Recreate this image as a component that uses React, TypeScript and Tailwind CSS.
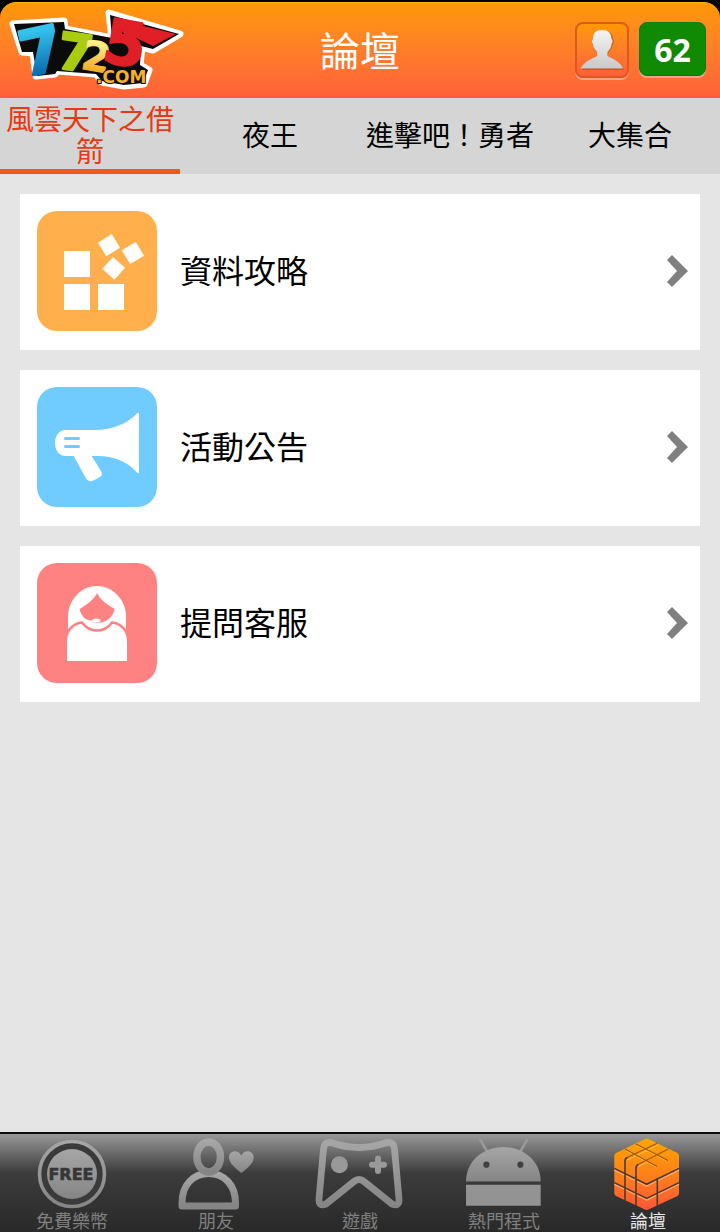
import { useState } from "react";

const Logo = () => (
  <svg viewBox="0 3 190 95" className="w-[190px] h-[95px]" role="img" aria-label="7725.com">
    <defs>
      <linearGradient id="logoBlue" x1="0" y1="0" x2="0" y2="1">
        <stop offset="0.2" stopColor="#35c3ec" />
        <stop offset="0.8" stopColor="#0b6cad" />
      </linearGradient>
      <linearGradient id="logoGold" x1="0" y1="0" x2="0" y2="1">
        <stop offset="0.2" stopColor="#fff08a" />
        <stop offset="0.8" stopColor="#f3ab25" />
      </linearGradient>
    </defs>
    {/* black badge with the white sticker edge */}
    <path
      d="M13 24 L64 21 L65 29 L112 38 L109 13 L180 34 L153 50 L142 47 L140 65 L149 70 L144 84 L124 86 L102 82 L96 74 L57 71 L55 74 L36 76 L33 53 L22 52 Z"
      fill="#0b0b0b"
      stroke="#fff"
      strokeWidth="7"
      strokeLinejoin="round"
    />
    <path
      d="M14 24 L64 22 L65 29 L112 38 L110 15 L179 34 L153 49 L141 46 L140 65 L148 70 L143 83 L124 85 L102 81 L96 74 L57 71 L55 74 L37 76 L33 52 L22 52 Z"
      fill="#0b0b0b"
    />
    <path d="M115 19 L176 34 L153 46 L136 38 L130 44 Z" fill="#e01f26" />
    <g fontFamily="DejaVu Sans" fontWeight="bold" strokeLinejoin="round">
      <text x="19" y="73" fontSize="62" fill="url(#logoBlue)" stroke="url(#logoBlue)" strokeWidth="3" transform="rotate(-12 40 50)">
        7
      </text>
      <text x="58" y="70" fontSize="50" fill="#a9cc10" stroke="#a9cc10" strokeWidth="3" transform="rotate(8 75 52)">
        7
      </text>
      <text x="82" y="71" fontSize="41" fill="url(#logoGold)" stroke="url(#logoGold)" strokeWidth="1" transform="rotate(10 95 57)">
        2
      </text>
      <text x="104" y="65" fontSize="61" fill="#e01f26" stroke="#e01f26" strokeWidth="2" transform="rotate(10 125 43)">
        5
      </text>
      <text x="96" y="83" fontSize="17" fill="#f6b127" stroke="#0b0b0b" strokeWidth="2" paintOrder="stroke">
        .COM
      </text>
    </g>
  </svg>
);

const UserIcon = () => (
  <svg viewBox="2 2 50 52" className="w-full h-full" aria-hidden="true">
    <defs>
      <linearGradient id="person" x1="0" y1="0" x2="0" y2="1">
        <stop offset="0" stopColor="#f4f4f4" />
        <stop offset="1" stopColor="#c9c9c9" />
      </linearGradient>
    </defs>
    <path
      d="M7 48 C9 41 17 38 22 35 V31 C19 28 18 24 18 22 C16 20 17 18 18 17 C18 11 22 9 28 9 S38 11 38 17 C39 18 40 20 38 22 C38 24 36 28 33 31 V35 C38 38 47 41 49 48 Z"
      fill="#a84a1c"
      opacity="0.6"
    />
    <path
      d="M6 46.5 C8 40 17 37 22 34 V30 C19 27 18 24 18 22 C16 20 17 18 18 17 C18 11 21 8 27 8 S36.5 11 36.5 17 C38 18 38 20 36.5 22 C36.5 24 35.5 27 32.5 30 V34 C37.5 37 46 40 48 46.5 Z"
      fill="url(#person)"
    />
  </svg>
);

const Chevron = () => (
  <svg viewBox="0 0 22 34" className="w-[22px] h-[34px]" aria-hidden="true">
    <path d="M1 6 L6 1 L22 17 L6 33 L1 28 L11 17 Z" fill="#808080" />
  </svg>
);

const BlocksIcon = () => (
  <svg viewBox="0 0 120 120" className="w-full h-full" fill="#fff" aria-hidden="true">
    <path d="M27 40h26v26h-26z M27 73h26v26h-26z M61 73h26v26h-26z" />
    <path d="M61 31.7 L74.7 23 L83 36.7 L69.3 45.3 Z M84.7 39.3 L98.7 31 L107 44.7 L93.3 53 Z M65.3 57.7 L76 46 L88 56.7 L77.3 68.7 Z" />
  </svg>
);

const MegaphoneIcon = () => (
  <svg viewBox="0 0 120 120" className="w-full h-full" fill="#fff" aria-hidden="true">
    <path d="M29 43 H58 C76 43 91 36 100 26.5 Q102 25 102 27 V85 Q102 87 100 85.5 C90 74 76 69 61 69 H54.7 L64.3 84.5 Q66 88 63 90 L57 93.3 Q52 95.5 49.3 92 L36.7 69 H29 C22 69 18 63 18 56 S22 43 29 43 Z" />
    <path d="M28.5 51.5 H41.5 M28.5 59.5 H41.5" stroke="#70ccff" strokeWidth="3.2" strokeLinecap="round" />
  </svg>
);

const SupportIcon = () => (
  <svg viewBox="0 0 120 120" className="w-full h-full" fill="#fff" aria-hidden="true">
    <path d="M31 67 V54 C31 36 45 23 60 23 S89 36 89 54 V67 Z" />
    <path d="M60 30 C57 37 49 42 42.7 46 C44 54 51 60 60 60 C69 60 76 54 77.7 46 C71 42 63 37 60 30 Z" fill="#ff8282" />
    <path d="M44 54 C47 57 51 59 58 58.5" fill="none" stroke="#fff" strokeWidth="1.8" />
    <ellipse cx="59.5" cy="57.5" rx="4" ry="2" />
    <path
      d="M28.7 99.3 V79 C28.7 67 37 60 45 59.5 C49 65 54 67.5 60 67.5 C66 67.5 71 65 75 59.5 C83 60 91.3 67 91.3 79 V99.3 Z"
      stroke="#ff8282"
      strokeWidth="2.6"
    />
  </svg>
);

const FreeIcon = () => (
  <svg viewBox="0 0 96 74" className="w-24 h-[74px]" aria-hidden="true">
    <circle cx="48" cy="36" r="32.5" fill="#3a3a3a" stroke="url(#navGray)" strokeWidth="3.6" />
    <circle cx="48" cy="36" r="25" fill="url(#navGray)" />
    <text
      x="47"
      y="42"
      fontSize="16"
      fontWeight="bold"
      fontFamily="DejaVu Sans"
      textAnchor="middle"
      fill="#363636"
      stroke="#363636"
      strokeWidth="0.6"
    >
      FREE
    </text>
  </svg>
);

const FriendsIcon = () => (
  <svg viewBox="0 0 96 74" className="w-24 h-[74px]" fill="none" aria-hidden="true">
    <path d="M14 68 V65 C14 47 25 35.5 40.7 35.5 S67.5 47 67.5 65 V68 Z" stroke="url(#navGray)" strokeWidth="7" strokeLinejoin="round" />
    <ellipse cx="40.7" cy="19" rx="11.8" ry="15" stroke="url(#navGray)" strokeWidth="7.4" />
    <path
      d="M73.3 35 C70 32 61 26 61 19.5 C61 12 70.5 11 73.3 17.5 C76 11 85.7 12 85.7 19.5 C85.7 26 77 32 73.3 35 Z"
      fill="url(#navGray)"
    />
  </svg>
);

const GameIcon = () => (
  <svg viewBox="0 0 96 74" className="w-24 h-[74px]" aria-hidden="true">
    <path
      d="M11.5 11 Q12 4 19 4.5 Q33 9.5 47 9.5 T75 4.5 Q82 4 82.5 11 L87 61 Q87.5 69 80 66 L52 43.5 Q47 39.5 42 43.5 L14 66 Q6.5 69 7 61 Z"
      fill="none"
      stroke="url(#navGray)"
      strokeWidth="6.8"
      strokeLinejoin="round"
    />
    <circle cx="27.4" cy="26.7" r="8.5" fill="#999" />
    <path d="M66 20.5 V33 M60 26.7 H72" stroke="#999" strokeWidth="6" strokeLinecap="round" />
  </svg>
);

const AndroidIcon = () => (
  <svg viewBox="0 0 96 74" className="w-24 h-[74px]" aria-hidden="true">
    <path d="M24.5 2 L32 15 M71 2 L63.5 15" stroke="#999" strokeWidth="2.6" strokeLinecap="round" />
    <path d="M10 43.6 C10 23 27 9 47.3 9 S84.7 23 84.7 43.6 Z" fill="url(#navGray)" />
    <path d="M10 46.8 H84.7 V67.8 H10 Z" fill="#939393" />
    <circle cx="30.4" cy="26.7" r="3.1" fill="#404040" />
    <circle cx="64.4" cy="26.7" r="3.1" fill="#404040" />
  </svg>
);

const CubeIcon = () => (
  <svg viewBox="0 0 96 74" className="w-24 h-[74px]" fill="none" aria-hidden="true">
    <defs>
      <linearGradient id="cube" x1="0" y1="0" x2="0" y2="1">
        <stop offset="0" stopColor="#ffa502" />
        <stop offset="0.5" stopColor="#ff8119" />
        <stop offset="1" stopColor="#ff5636" />
      </linearGradient>
    </defs>
    <path
      d="M45 1 Q46.7 0 48.4 1 L77.5 15 Q79 16 79 18 V55 Q79 57 77.5 58 L48.4 71.5 Q46.7 72.3 45 71.5 L16 58 Q14.3 57 14.3 55 V18 Q14.3 16 16 15 Z"
      fill="url(#cube)"
    />
    {/* highlights sit just under each gap */}
    <path d="M14.3 32 L46.7 48 L79 32 M14.3 46.2 L46.7 62 L79 46.2" stroke="#ffa66b" strokeWidth="1.4" />
    <path d="M38 28.6 L47 24.5 M27.5 22 L58 7 M37 7.5 L66 22.5 M26 12.5 L56 29" stroke="#ffc04a" strokeWidth="1" />
    <path d="M25 20.5 L57.3 5.3 M36 27.5 L68.3 11 M36 6 L68 22.5 M25 11 L57 28.5" stroke="#9a5a10" strokeWidth="1.2" />
    <path
      d="M14.3 30.4 L46.7 46.2 L79 30.4 M14.3 44.6 L46.7 60.4 L79 44.6 M25 63 V23 Q25 20.5 27.5 19.5 M36 68 V30 Q36 27.5 38.5 26.5 M57.3 68 V40"
      stroke="#4a3a2c"
      strokeWidth="1.6"
      strokeLinejoin="round"
    />
  </svg>
);

const tabs = ["風雲天下之借箭", "夜王", "進擊吧！勇者", "大集合"];

const sections = [
  { label: "資料攻略", color: "bg-[#ffb04c]", Icon: BlocksIcon },
  { label: "活動公告", color: "bg-[#70ccff]", Icon: MegaphoneIcon },
  { label: "提問客服", color: "bg-[#ff8282]", Icon: SupportIcon },
];

const navItems = [
  { label: "免費樂幣", Icon: FreeIcon },
  { label: "朋友", Icon: FriendsIcon },
  { label: "遊戲", Icon: GameIcon },
  { label: "熱門程式", Icon: AndroidIcon },
  { label: "論壇", Icon: CubeIcon, active: true },
];

const App = () => {
  const [activeTab, setActiveTab] = useState<number>(0);

  return (
    <div
      lang="zh-TW"
      className="flex flex-col min-h-screen bg-[#e5e5e5] text-black font-['Roboto','Noto_Sans_CJK_TC',sans-serif]"
    >
      {/* gradient shared by the bottom icons */}
      <svg className="absolute w-0 h-0" aria-hidden="true">
        <defs>
          <linearGradient id="navGray" x1="0" y1="0" x2="0" y2="1">
            <stop offset="0" stopColor="#a6a6a6" />
            <stop offset="1" stopColor="#858585" />
          </linearGradient>
        </defs>
      </svg>

      <div className="bg-black pt-0.5">
        <header className="grid grid-cols-[1fr_auto_1fr] items-center h-24 rounded-t-2xl border-t border-[#ffb400] bg-linear-to-b from-[#ff9800] to-[#ff5f38]">
          <Logo />
          <h1 className="text-white text-[40px] leading-[48px] pt-1">論壇</h1>
          <div className="flex justify-end gap-2.5 pr-3.5 pb-0.5">
            <button
              type="button"
              aria-label="個人資料"
              className="w-[54px] h-14 rounded-lg border-2 border-[#dc5a20] shadow-[0_2px_0_#ffa58a] bg-linear-to-b from-[#ff9800] to-[#ff5f38]"
            >
              <UserIcon />
            </button>
            <button
              type="button"
              className="w-[67px] h-[54px] rounded-lg border border-[#0a7a06] shadow-[0_2px_0_#e8a58a] bg-[#108a04] text-white text-[32px] leading-[54px] font-bold font-['Open_Sans',sans-serif]"
            >
              62
            </button>
          </div>
        </header>
      </div>

      <nav className="grid grid-cols-4 min-h-[76px] bg-[#d5d5d5]">
        {tabs.map((tab, index) => (
          <button
            type="button"
            key={tab}
            onClick={() => setActiveTab(index)}
            className={`flex items-center justify-center px-1.5 pt-[7px] text-[28px] leading-8 border-b-[5px] ${
              activeTab === index ? "text-[#e63a12] border-[#ee5a1e]" : "border-transparent"
            }`}
          >
            {tab}
          </button>
        ))}
      </nav>

      <main className="flex-1 flex flex-col gap-5 p-5">
        {sections.map(({ label, color, Icon }) => (
          <a key={label} href="#" className="flex items-center gap-[23px] bg-white pl-[17px] pr-3 pt-[17px] pb-[19px]">
            <span className={`w-[120px] h-[120px] rounded-[20px] shrink-0 ${color}`}>
              <Icon />
            </span>
            <span className="flex-1 text-[32px] leading-10 pt-0.5">{label}</span>
            <Chevron />
          </a>
        ))}
      </main>

      <nav className="grid grid-cols-5 border-t-2 border-[#0a0a0c] bg-linear-to-b from-[#999] via-[#3c3c3c] via-40% to-[#292929]">
        {navItems.map(({ label, Icon, active }) => (
          <a key={label} href="#" className="flex flex-col items-center pt-1">
            <Icon />
            <span className={`text-lg leading-5 ${active ? "text-[#e6e6e6]" : "text-[#808080]"}`}>{label}</span>
          </a>
        ))}
      </nav>
    </div>
  );
};

export default App;
